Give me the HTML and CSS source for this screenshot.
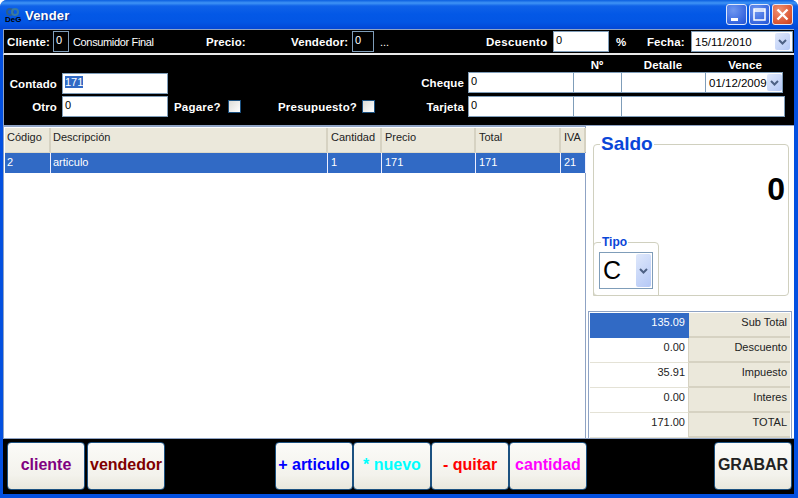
FILE: index.html
```html
<!DOCTYPE html>
<html lang="es">
<head>
    <meta charset="UTF-8">
    <title>Vender</title>
    <link rel="stylesheet" href="styles.css">
</head>
<body>
<div class="window">
    <div class="titlebar">
        <span class="app-icon">
            <svg class="app-blob" width="14" height="9" viewBox="0 0 14 9"><circle cx="4" cy="4" r="3" fill="none" stroke="#2d5f8f" stroke-width="2"/><circle cx="9" cy="4" r="3" fill="none" stroke="#3a7a9f" stroke-width="2"/></svg>
            <span class="app-logo">DeG</span>
        </span>
        <span class="title-text">Vender</span>
        <span class="win-btn btn-min"><svg width="21" height="21" viewBox="0 0 21 21"><rect x="5" y="14" width="7" height="3" fill="#fff"/></svg></span>
        <span class="win-btn btn-max"><svg width="21" height="21" viewBox="0 0 21 21"><path d="M5 5h11v11H5zM5 7h11" fill="none" stroke="#fff" stroke-width="1.5"/></svg></span>
        <span class="win-btn btn-close"><svg width="21" height="21" viewBox="0 0 21 21"><path d="M5.500 5.500l10 10M15.500 5.500l-10 10" stroke="#fff" stroke-width="2.4"/></svg></span>
    </div>

    <div class="client-bar">
        <label class="lbl lbl-cliente">Cliente:</label>
        <span class="box box-code">0</span>
        <span class="plain plain-name">Consumidor Final</span>
        <label class="lbl lbl-precio">Precio:</label>
        <label class="lbl lbl-vendedor">Vendedor:</label>
        <span class="box box-code box-vend">0</span>
        <span class="plain plain-dots">...</span>
        <label class="lbl lbl-descuento">Descuento</label>
        <span class="box box-desc">0</span>
        <label class="lbl lbl-pct">%</label>
        <label class="lbl lbl-fecha">Fecha:</label>
        <span class="box date date-top">15/11/2010<span class="arrow"><svg width="9" height="6" viewBox="0 0 9 6"><path d="M1 1l3.500 3.500L8 1" fill="none" stroke="#4d6185" stroke-width="2"/></svg></span></span>
    </div>

    <div class="pay-panel">
        <div class="pay-left">
            <div class="pay-row">
                <label class="lbl lbl-pay">Contado</label>
                <span class="box box-pay"><span class="sel-text">171</span></span>
            </div>
            <div class="pay-row">
                <label class="lbl lbl-pay">Otro</label>
                <span class="box box-pay">0</span>
                <label class="lbl lbl-pagare">Pagare?</label>
                <span class="check"></span>
                <label class="lbl lbl-presu">Presupuesto?</label>
                <span class="check"></span>
            </div>
        </div>
        <div class="pay-right">
            <div class="pay-grid">
                <span></span><span></span>
                <label class="lbl head-cell">Nº</label>
                <label class="lbl head-cell">Detalle</label>
                <label class="lbl head-cell head-vence">Vence</label>
                <label class="lbl lbl-right">Cheque</label>
                <span class="box cell">0</span>
                <span class="box cell"></span>
                <span class="box cell"></span>
                <span class="box date date-vence">01/12/2009<span class="arrow"><svg width="9" height="6" viewBox="0 0 9 6"><path d="M1 1l3.500 3.500L8 1" fill="none" stroke="#4d6185" stroke-width="2"/></svg></span></span>
                <label class="lbl lbl-right">Tarjeta</label>
                <span class="box cell">0</span>
                <span class="box cell"></span>
                <span class="box cell cell-wide"></span>
            </div>
        </div>
    </div>

    <div class="main">
        <div class="items">
            <div class="items-row items-head">
                <span>Código</span><span>Descripción</span><span>Cantidad</span><span>Precio</span><span>Total</span><span>IVA</span>
            </div>
            <div class="items-row items-sel">
                <span>2</span><span>articulo</span><span>1</span><span>171</span><span>171</span><span>21</span>
            </div>
        </div>
        <div class="side">
            <fieldset class="saldo">
                <legend>Saldo</legend>
                <div class="saldo-value">0</div>
                <fieldset class="tipo">
                    <legend>Tipo</legend>
                    <div class="tipo-select">C<span class="arrow arrow-tall"><svg width="9" height="6" viewBox="0 0 9 6"><path d="M1 1l3.500 3.500L8 1" fill="none" stroke="#4d6185" stroke-width="2"/></svg></span></div>
                </fieldset>
            </fieldset>
            <div class="totals">
                <div class="tot-row tot-sel"><span class="tot-val">135.09</span><span class="tot-name">Sub Total</span></div>
                <div class="tot-row"><span class="tot-val">0.00</span><span class="tot-name">Descuento</span></div>
                <div class="tot-row"><span class="tot-val">35.91</span><span class="tot-name">Impuesto</span></div>
                <div class="tot-row"><span class="tot-val">0.00</span><span class="tot-name">Interes</span></div>
                <div class="tot-row"><span class="tot-val">171.00</span><span class="tot-name">TOTAL</span></div>
            </div>
        </div>
    </div>

    <div class="actions">
        <button class="act act-cliente">cliente</button>
        <button class="act act-vendedor">vendedor</button>
        <button class="act act-articulo">+ articulo</button>
        <button class="act act-nuevo">* nuevo</button>
        <button class="act act-quitar">- quitar</button>
        <button class="act act-cantidad">cantidad</button>
        <button class="act act-grabar">GRABAR</button>
    </div>
</div>
</body>
</html>
```
FILE: styles.css
```css
/* Vender window */
html, body {
    margin: 0;
    padding: 0;
}
body {
    width: 798px;
    height: 498px;
    overflow: hidden;
    font-family: "Liberation Sans", Arial, sans-serif;
    font-size: 12px;
}
.window {
    width: 798px;
    height: 498px;
    box-sizing: border-box;
    padding: 0 4px 4px 3px;
    background-color: #0350e0;
    display: flex;
    flex-direction: column;
    border-radius: 7px 7px 0 0;
}

/* title bar */
.titlebar {
    height: 29px;
    margin: 0 -4px 0 -3px;
    padding: 0 5px 0 5px;
    display: flex;
    align-items: center;
    flex: none;
    border-radius: 7px 7px 0 0;
    background: linear-gradient(#0a5ee0 0, #3f94f5 3px, #0f62e8 6px, #0358e6 14px, #0356e4 22px, #0347d6 29px);
}
.app-icon {
    width: 16px;
    height: 16px;
    display: block;
    position: relative;
    margin-top: 2px;
}
.app-blob {
    position: absolute;
    left: 1px;
    top: 0;
}
.app-logo {
    position: absolute;
    left: 0;
    top: 8px;
    font-size: 8px;
    line-height: 8px;
    font-weight: bold;
    color: #000;
}
.title-text {
    margin: 2px 0 0 4px;
    flex: 1;
    color: #fff;
    font-size: 13px;
    font-weight: bold;
    letter-spacing: 0.2px;
    text-shadow: 1px 1px 1px #0a2a8c;
}
.win-btn {
    width: 21px;
    height: 21px;
    margin-left: 2px;
    border: 0;
    border-radius: 3px;
    outline: 1px solid #dfe8fb;
    outline-offset: -1px;
    display: block;
}
.win-btn svg {
    display: block;
}
.btn-min, .btn-max {
    background: radial-gradient(circle at 35% 30%, #6f97f0, #2f5fdc 75%, #2450c8);
}
.btn-close {
    background: radial-gradient(circle at 35% 30%, #ee9274, #d9502c 70%, #b83c1a);
}

/* black bars */
.client-bar {
    height: 23px;
    flex: none;
    display: flex;
    align-items: center;
    background-color: #000;
    border-top: 1px solid #8fa3c4;
    border-bottom: 2px solid #e8e8e8;
    border-left: 1px solid #8fa3c4;
    box-sizing: content-box;
}
.lbl {
    color: #fff;
    font-weight: bold;
    font-size: 11.500px;
    letter-spacing: 0.1px;
    white-space: nowrap;
}
.plain {
    color: #fff;
    font-size: 11px;
}
.box {
    display: block;
    box-sizing: border-box;
    background-color: #fff;
    border: 1px solid #7f9db9;
    color: #000;
    font-size: 11px;
    line-height: 16px;
    padding-left: 2px;
    position: relative;
}
.box-code {
    width: 16px;
    height: 21px;
    background-color: #000;
    color: #fff;
    margin-left: 3px;
}
.box-vend { width: 22px; }
.lbl-cliente { margin-left: 3px; width: 43px; }
.plain-name { margin-left: 4px; width: 133px; letter-spacing: -0.35px; }
.lbl-precio { width: 85px; }
.lbl-vendedor { width: 58px; }
.plain-dots { margin-left: 6px; width: 106px; }
.lbl-descuento { width: 67px; letter-spacing: 0.3px; }
.box-desc { width: 56px; height: 21px; }
.lbl-pct { margin-left: 7px; width: 31px; }
.lbl-fecha { width: 44px; }
.date {
    height: 21px;
    display: flex;
    align-items: center;
    justify-content: space-between;
    font-size: 11.500px;
    padding: 0 2px 0 3px;
}
.date-top { width: 102px; }
.arrow {
    width: 15px;
    height: 17px;
    flex: none;
    display: flex;
    align-items: center;
    justify-content: center;
    background: linear-gradient(135deg, #dfe8fb, #b4c8f6);
    border-radius: 2px;
}

/* payment panel */
.pay-panel {
    height: 70px;
    flex: none;
    background-color: #000;
    display: flex;
    justify-content: space-between;
    border-left: 1px solid #8fa3c4;
    box-sizing: border-box;
}
.pay-left {
    padding-top: 18px;
    display: flex;
    flex-direction: column;
    gap: 2px;
}
.pay-row {
    display: flex;
    align-items: center;
    height: 21px;
}
.lbl-pay {
    width: 53px;
    text-align: right;
    margin-right: 5px;
}
.box-pay {
    width: 106px;
    height: 21px;
}
.sel-text {
    background-color: #316ac5;
    color: #fff;
}
.lbl-pagare { margin-left: 6px; width: 54px; letter-spacing: 0.2px; }
.check {
    width: 13px;
    height: 13px;
    box-sizing: border-box;
    border: 1px solid #1c5180;
    background: linear-gradient(135deg, #dcdcd7, #fff);
}
.lbl-presu { margin-left: 37px; width: 84px; letter-spacing: 0.2px; }
.pay-right {
    padding-right: 9px;
}
.pay-grid {
    display: grid;
    grid-template-columns: 48px 105px 48px 84px 80px;
    grid-template-rows: 17px 24px 21px;
    align-items: start;
}
.pay-grid .head-cell {
    text-align: center;
    align-self: end;
    line-height: 13px;
}
.lbl-right {
    text-align: right;
    padding-right: 4px;
    line-height: 23px;
}
.cell { height: 21px; margin-right: -1px; }
.cell-wide { grid-column: span 2; margin-right: 0; }
.date-vence { height: 21px; width: 78px; padding-right: 1px; }

/* main area */
.main {
    flex: 1;
    display: flex;
    min-height: 0;
    background-color: #fff;
    border-top: 1px solid #8fa3c4;
}
.items {
    width: 583px;
    flex: none;
    box-sizing: border-box;
    border: 1px solid #8fa3c4;
    border-bottom: 0;
    padding: 1px 0 0 1px;
    background-color: #fff;
}
.items-row {
    display: grid;
    grid-template-columns: 46px 277px 54px 94px 85px 25px;
}
.items-row span {
    font-size: 11px;
    padding-left: 3px;
    white-space: nowrap;
    overflow: hidden;
}
.items-row span:nth-child(-n+2) {
    padding-left: 2px;
}
.items-head {
    height: 25px;
    line-height: 19px;
    background-color: #ebe8db;
    color: #222;
    border-bottom: 1px solid #dcd9c9;
    box-sizing: border-box;
}
.items-head span {
    border-right: 2px solid #d6d2c2;
}
.items-sel {
    height: 20px;
    line-height: 19px;
    background-color: #316ac5;
    color: #fff;
}
.items-sel span {
    border-right: 1px solid #eef;
}
.side {
    flex: 1;
    padding: 0 2px 0 1px;
    display: flex;
    flex-direction: column;
}
.saldo {
    margin: 8px 3px 0 6px;
    padding: 0;
    height: 162px;
    flex: none;
    box-sizing: border-box;
    border: 1px solid #d0d0bf;
    border-radius: 4px;
}
.saldo legend {
    margin-left: 6px;
    padding: 0 1px;
    color: #0a46d8;
    font-size: 19px;
    font-weight: bold;
    line-height: 20px;
}
.saldo-value {
    text-align: right;
    font-size: 32px;
    font-weight: bold;
    color: #000;
    line-height: 32px;
    margin-top: 19px;
    padding-right: 3px;
}
.saldo .tipo {
    margin: 31px 0 0 -1px;
    width: 66px;
    height: 60px;
    padding: 0 5px;
    box-sizing: border-box;
    border: 1px solid #d0d0bf;
    border-radius: 4px 4px 0 0;
}
.saldo .tipo legend {
    margin-left: 2px;
    font-size: 12px;
    line-height: 13px;
    padding: 0 1px;
}
.tipo-select {
    width: 54px;
    height: 37px;
    margin-top: 3px;
    box-sizing: border-box;
    border: 1px solid #7f9db9;
    display: flex;
    align-items: center;
    justify-content: space-between;
    font-size: 25px;
    padding: 1px 1px 1px 3px;
}
.arrow-tall {
    height: 33px;
}
.totals {
    margin: 15px 0 0 1px;
    border: 1px solid #8fa3c4;
    border-bottom: 0;
    padding: 1px 1px 0 1px;
    flex: 1;
}
.tot-row {
    display: grid;
    grid-template-columns: 99px 101px;
    height: 25px;
    line-height: 18px;
    font-size: 11px;
    color: #222;
}
.tot-val {
    text-align: right;
    padding-right: 3px;
    border-bottom: 1px solid #e4e2d6;
    border-right: 1px solid #d6d2c2;
}
.tot-name {
    text-align: right;
    padding-right: 3px;
    background-color: #ebe8db;
    border-bottom: 2px solid #d6d2c2;
}
.tot-sel .tot-val {
    background-color: #316ac5;
    color: #fff;
    border-color: #316ac5;
}

/* bottom buttons */
.actions {
    height: 56px;
    flex: none;
    box-sizing: border-box;
    background-color: #000;
    border-top: 1px solid #8fa3c4;
    display: flex;
    padding: 3px 0 0 4px;
}
.act {
    width: 78px;
    height: 48px;
    padding: 0 0 2px;
    box-sizing: border-box;
    border: 1px solid #1c5180;
    border-radius: 4px;
    background: linear-gradient(#fbfbf8, #f3f2ec 70%, #e9e7dc);
    font-family: "Liberation Sans", Arial, sans-serif;
    font-size: 16px;
    font-weight: bold;
    white-space: nowrap;
}
.act-cliente { color: #800080; }
.act-vendedor { color: #800000; margin-left: 2px; }
.act-articulo { color: #0000ff; margin-left: 110px; }
.act-nuevo { color: #00ffff; }
.act-quitar { color: #ff0000; }
.act-cantidad { color: #ff00ff; }
.act-grabar { color: #222; margin-left: 127px; }
```
